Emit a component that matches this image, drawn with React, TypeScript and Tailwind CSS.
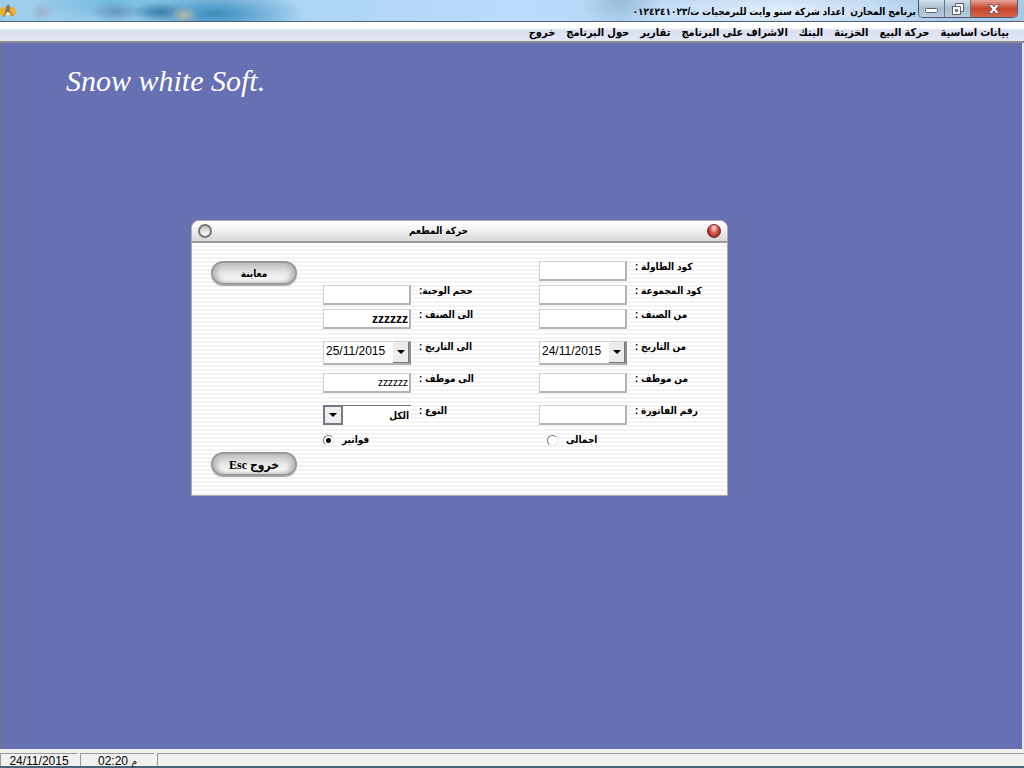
import { useState } from 'react';
import type { ReactNode } from 'react';

const menuItems = [
    'بيانات اساسية',
    'حركة البيع',
    'الخزينة',
    'البنك',
    'الاشراف على البرنامج',
    'تقارير',
    'حول البرنامج',
    'خروج',
];

const inputStyle =
    'w-[88px] h-5 shrink-0 border border-[#d0d0d0] border-r-2 border-b-2 border-r-[#b4b4b4] border-b-[#b4b4b4] bg-white px-px text-right outline-none';

function DownArrow() {
    return (
        <svg viewBox="0 0 8 4" className="w-2 h-1" aria-hidden="true">
            <path d="M0 0h8L4 4z" fill="#000" />
        </svg>
    );
}

function AppIcon() {
    return (
        <svg viewBox="0 0 17 14" className="w-[17px] h-3.5 shrink-0" aria-hidden="true">
            <ellipse cx="3.500" cy="7.500" rx="3.800" ry="4.500" fill="#eeb02c" />
            <ellipse cx="12" cy="7.500" rx="4" ry="4.500" fill="#f0b030" />
            <path d="M8 0l2 2v6H5l1-5z" fill="#80796f" />
            <path d="M6 8l-3 5M10 7l3 5" stroke="#936b2c" strokeWidth="1" />
            <path d="M6 9l2 4 2-4z" fill="#dce9ef" />
        </svg>
    );
}

function TitleBar() {
    return (
        <header className="relative flex h-[21px] shrink-0 items-start justify-end overflow-hidden bg-linear-to-r from-[#9bcdea] via-[#badbfb] to-[#a9c8e4] pr-1.5">
            {/* blurred glass background */}
            <div className="absolute inset-0 bg-[radial-gradient(ellipse_14px_9px_at_184px_15px,#b4b7a6,transparent),radial-gradient(ellipse_28px_9px_at_160px_12px,#397fac,transparent),radial-gradient(ellipse_90px_26px_at_215px_14px,#3a8dbd,transparent),radial-gradient(ellipse_26px_10px_at_116px_12px,#6399bd,transparent),radial-gradient(ellipse_12px_10px_at_42px_12px,#98b3d1,transparent),radial-gradient(ellipse_80px_24px_at_110px_2px,#72b7dd,transparent),radial-gradient(ellipse_40px_25px_at_620px_2px,#98bcd8,transparent),radial-gradient(ellipse_170px_26px_at_780px_12px,#e4f0fc,transparent)]" />
            <div className="absolute left-0 top-1">
                <AppIcon />
            </div>
            <h1 dir="rtl" className="relative pt-1 pr-0.5 text-[10px] leading-4 font-bold whitespace-pre">
                {'برنامج المخازن  اعداد شركة سنو وايت للبرمجيات ت/٠١٢٤٢٤١٠٢٣'}
            </h1>
            <div className="relative flex h-[18px] w-[100px] shrink-0 overflow-hidden rounded-b-[5px] border border-t-0 border-[#4c5a6c]">
                <button aria-label="Minimize" className="flex flex-1 items-center justify-center border-r border-[#66778a] bg-linear-to-b from-[#d3dfeb] via-[#a8bccf] to-[#b9cde0]">
                    <svg viewBox="0 0 13 6" className="mt-1 w-[13px] h-1.5">
                        <rect x="0.500" y="0.500" width="12" height="4" rx="1" fill="#fff" stroke="#5c6674" />
                    </svg>
                </button>
                <button aria-label="Restore" className="flex flex-1 items-center justify-center border-r border-[#66778a] bg-linear-to-b from-[#d3dfeb] via-[#a8bccf] to-[#b9cde0]">
                    <svg viewBox="0 0 12 12" className="w-3 h-3">
                        <path d="M3.500 .5h8v8h-8z" fill="#fff" stroke="#555f6e" />
                        <path d="M.5 3.500h8v8h-8z" fill="#fff" stroke="#555f6e" />
                        <path d="M3.500 6.500h2v2h-2z" fill="#b0c0d0" stroke="#555f6e" />
                    </svg>
                </button>
                <button aria-label="Close" className="flex w-[46px] items-center justify-center bg-linear-to-b from-[#e5a596] via-[#c8432b] to-[#d4664c]">
                    <svg viewBox="0 0 12 10" className="w-3 h-2.5">
                        <path d="M.5.5h3.500L6 3 8 .5h3.500L8 5l3.500 4.500H8L6 7 4 9.500H.5L4 5z" fill="#fff" stroke="#6b4650" strokeWidth=".8" />
                    </svg>
                </button>
            </div>
        </header>
    );
}

function MenuBar() {
    return (
        <nav dir="rtl" className="flex h-[22px] shrink-0 items-start gap-[11px] border-t border-b-2 border-t-[#4b6279] border-b-[#8d8d92] bg-linear-to-b from-white from-30% via-[#dadff0] via-45% to-[#e3e7f5] px-[15px] pt-0.5">
            {menuItems.map((item) => (
                <button key={item} className="text-[11px] leading-4 font-bold whitespace-nowrap">
                    {item}
                </button>
            ))}
        </nav>
    );
}

function Row({ id, label, size = 'h-6', children }: { id: string; label: string; size?: string; children: ReactNode }) {
    return (
        <div className={`flex items-start gap-2 ${size}`}>
            {children}
            <label htmlFor={id} dir="rtl" className="text-[10px] leading-3 font-bold whitespace-nowrap">
                {label}
            </label>
        </div>
    );
}

function DateBox({ id, initial }: { id: string; initial: string }) {
    const [value, setValue] = useState(initial);

    return (
        <div className="flex h-6 w-[88px] shrink-0 border border-r-2 border-b-2 border-[#d0d0d0] border-r-[#8c8c8c] border-b-[#b4b4b4] bg-white">
            <input
                id={id}
                value={value}
                onChange={(e) => setValue(e.target.value)}
                className="min-w-0 flex-1 pl-0.5 pb-1 text-xs outline-none"
            />
            <button aria-label="Open calendar" className="flex w-4 items-center justify-center border-r border-b border-[#777] bg-[#ececec]">
                <DownArrow />
            </button>
        </div>
    );
}

function PillButton({ children }: { children: ReactNode }) {
    return (
        <button className="h-6 w-[86px] rounded-full border-2 border-[#999] bg-linear-to-b from-[#c4c4c4] via-[#e6e6e6] to-white leading-4 font-bold shadow-[inset_4px_0_4px_#bbb,inset_-4px_0_4px_#bbb,0_1px_1px_#aaa]">
            {children}
        </button>
    );
}

function Choice({ label, value, mode, onSelect, indent }: { label: string; value: string; mode: string; onSelect: (v: string) => void; indent?: boolean }) {
    return (
        <label className={`flex h-3.5 items-center gap-2 text-[10px] leading-3 font-bold ${indent ? 'pl-2' : ''}`}>
            <input
                type="radio"
                name="mode"
                value={value}
                checked={mode === value}
                onChange={() => onSelect(value)}
                className="size-[11px] appearance-none rounded-full border border-[#e8e8e8] border-t-[#777] border-l-[#777] bg-white checked:bg-[radial-gradient(circle,#000_2px,#fff_3px)]"
            />
            <span dir="rtl">{label}</span>
        </label>
    );
}

function MovementDialog() {
    const [mode, setMode] = useState('invoices');

    return (
        <section className="absolute left-[190px] top-[177px] w-[537px] overflow-hidden rounded-t-lg border border-[#a9a9b4] bg-white">
            <div className="flex h-[22px] items-center justify-between border-b-2 border-[#999] bg-linear-to-b from-white via-[#eee] to-[#d8d8d8] px-1.5">
                <button aria-label="Collapse" className="size-3.5 rounded-full border-2 border-[#777] bg-linear-to-b from-[#c4c4c4] to-white" />
                <h2 dir="rtl" className="pr-[42px] text-[10px] leading-4 font-bold">
                    حركة المطعم
                </h2>
                <button aria-label="Close dialog" className="size-3.5 rounded-full border border-[#6d2525] bg-[radial-gradient(ellipse_at_50%_25%,#ffd9d0_5%,#dc5148_45%,#9c2a26_75%,#f58b7c)]" />
            </div>

            <form
                onSubmit={(e) => e.preventDefault()}
                className="grid h-[252px] grid-cols-[112px_216px_1fr] bg-[repeating-linear-gradient(to_bottom,#fff_0px,#fff_2px,#f3f3f3_2px,#f3f3f3_4px)] pt-[18px] pl-[19px]"
            >
                <div className="flex h-[215px] flex-col justify-between">
                    <PillButton>
                        <span className="text-[10px]">معاينة</span>
                    </PillButton>
                    <PillButton>
                        <span dir="rtl" className="font-['Liberation_Serif','DejaVu_Sans_Condensed',serif] text-xs">خروج Esc</span>
                    </PillButton>
                </div>

                <div className="flex flex-col pt-6">
                    <Row id="meal-size" label="حجم الوجبة:">
                        <input id="meal-size" className={inputStyle} />
                    </Row>
                    <Row id="item-to" label="الى الصنف :" size="h-8">
                        <input id="item-to" defaultValue="zzzzzz" className={`${inputStyle} text-xs font-bold`} />
                    </Row>
                    <Row id="date-to" label="الى التاريخ :" size="h-8">
                        <DateBox id="date-to" initial="25/11/2015" />
                    </Row>
                    <Row id="employee-to" label="الى موظف :" size="h-8">
                        <input id="employee-to" defaultValue="zzzzzz" className={`${inputStyle} text-[10px]`} />
                    </Row>
                    <Row id="kind" label="النوع :" size="h-7">
                        <div className="relative h-5 w-[88px] shrink-0">
                            <select id="kind" dir="rtl" className="block h-5 w-full appearance-none border-t border-[#777] bg-white pr-0.5 text-[10px] font-bold outline-none">
                                <option>الكل</option>
                                <option>نقدى</option>
                            </select>
                            <span className="pointer-events-none absolute top-0 left-0 flex h-5 w-5 items-center justify-center border-2 border-[#777783] bg-[#eee]">
                                <DownArrow />
                            </span>
                        </div>
                    </Row>
                    <Choice label="فواتير" value="invoices" mode={mode} onSelect={setMode} />
                </div>

                <div className="flex flex-col">
                    <Row id="table-code" label="كود الطاولة :">
                        <input id="table-code" className={inputStyle} />
                    </Row>
                    <Row id="group-code" label="كود المجموعة :">
                        <input id="group-code" className={inputStyle} />
                    </Row>
                    <Row id="item-from" label="من الصنف :" size="h-8">
                        <input id="item-from" className={inputStyle} />
                    </Row>
                    <Row id="date-from" label="من التاريخ :" size="h-8">
                        <DateBox id="date-from" initial="24/11/2015" />
                    </Row>
                    <Row id="employee-from" label="من موظف :" size="h-8">
                        <input id="employee-from" className={inputStyle} />
                    </Row>
                    <Row id="invoice-no" label="رقم الفاتورة :" size="h-7">
                        <input id="invoice-no" className={inputStyle} />
                    </Row>
                    <Choice label="اجمالى" value="total" mode={mode} onSelect={setMode} indent />
                </div>
            </form>
        </section>
    );
}

function StatusBar() {
    return (
        <footer className="flex h-[19px] shrink-0 gap-[3px] border-b-2 border-[#4a6478] bg-[#f0f0f0] pt-1 text-xs leading-[14px]">
            <div className="w-[77px] border-t border-l border-[#999] text-center">24/11/2015</div>
            <div className="w-[74px] border-t border-l border-[#999] text-center">
                02:20 <span className="text-[10px]">م</span>
            </div>
            <div className="flex-1 border-t border-l border-[#999]" />
        </footer>
    );
}

export default function App() {
    return (
        <div className="flex h-screen flex-col overflow-hidden bg-[#f0f0f0] font-['Liberation_Sans','DejaVu_Sans_Condensed','DejaVu_Sans',sans-serif] text-black">
            <TitleBar />
            <MenuBar />
            <main className="relative flex-1 border-r-2 border-l border-r-[#e4e6f2] border-l-[#777] bg-[#6670b2]">
                <p className="pt-5 pl-[65px] font-['Liberation_Serif',serif] text-3xl leading-9 text-white italic">Snow white Soft.</p>
                <MovementDialog />
            </main>
            <StatusBar />
        </div>
    );
}
